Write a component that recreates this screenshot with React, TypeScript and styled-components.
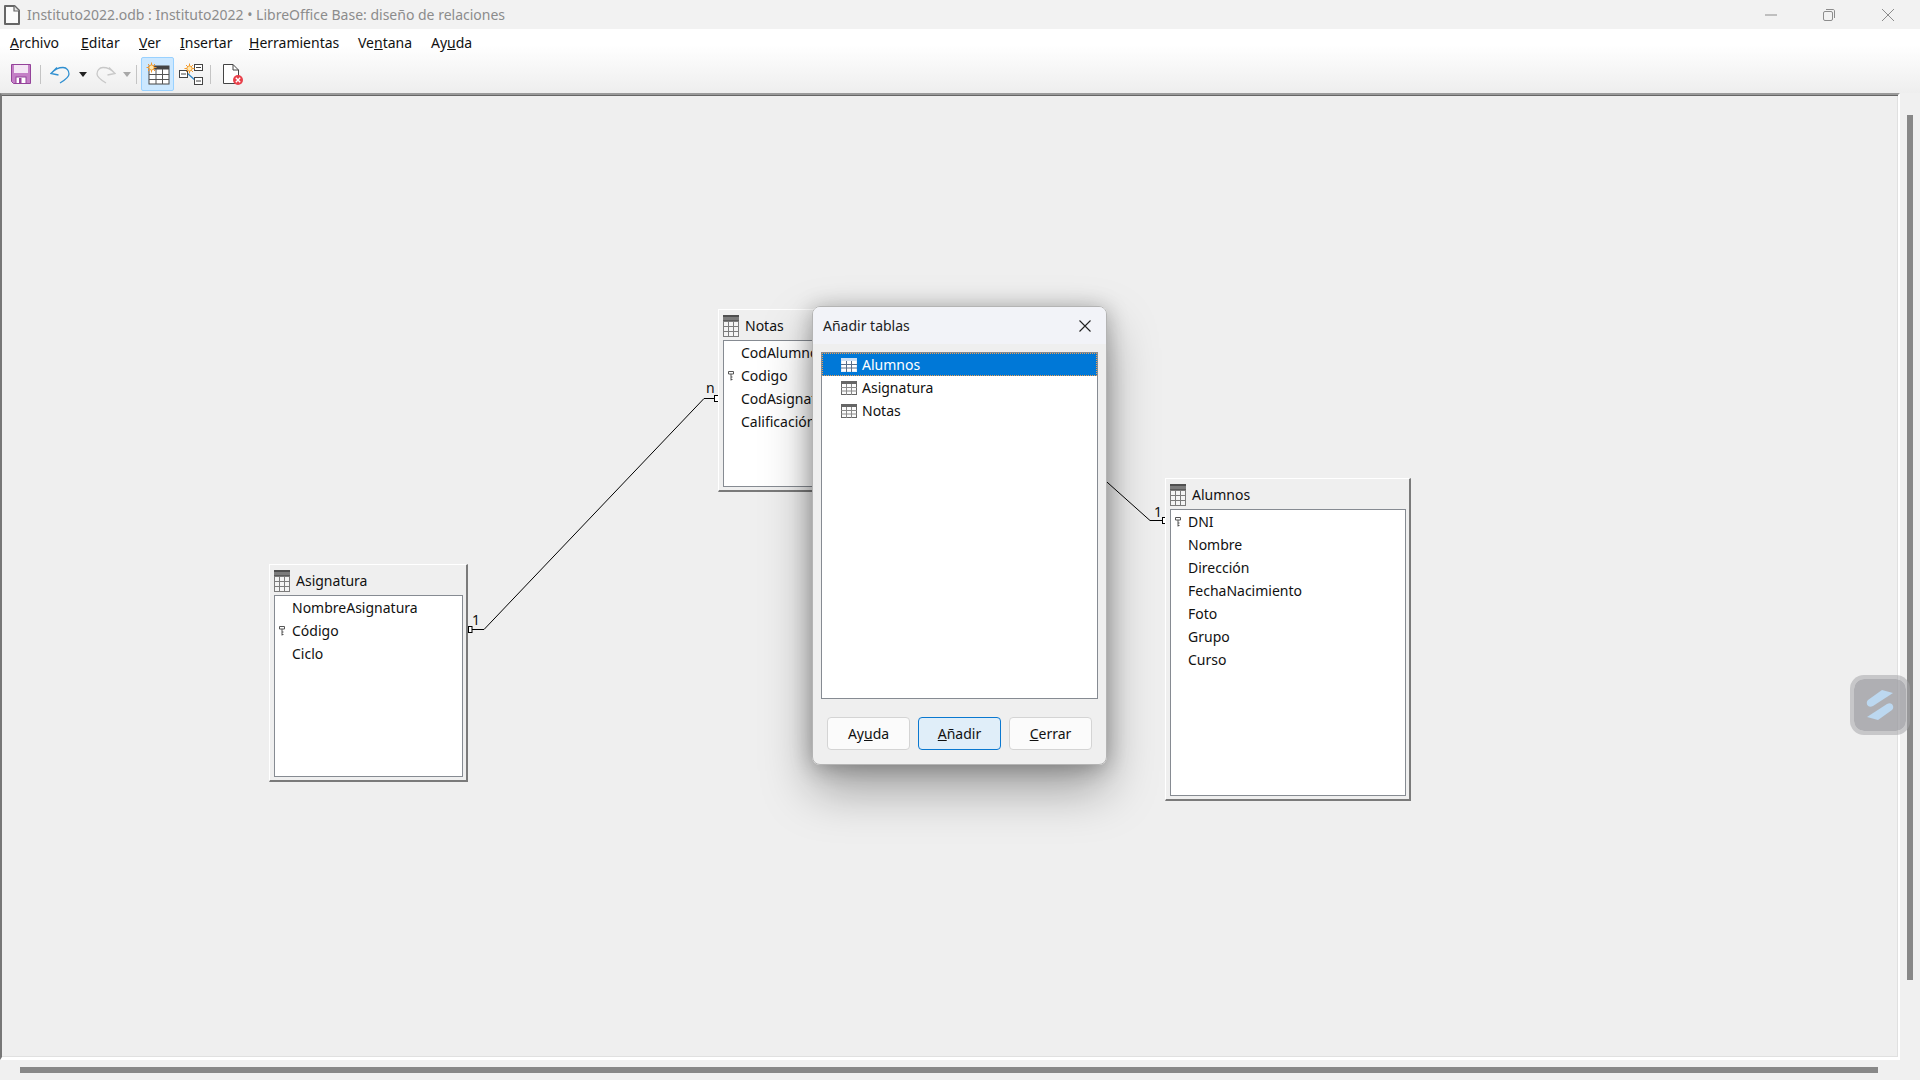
import React from "react";
import styled, { createGlobalStyle } from "styled-components";

const GlobalStyle = createGlobalStyle`
  html, body {
    margin: 0;
    padding: 0;
    background: #f0f0f0;
  }
  * {
    box-sizing: border-box;
  }
`;

const uiFont = `"Noto Sans", "Open Sans", sans-serif`;

const Page = styled.div`
  position: relative;
  width: 1920px;
  height: 1080px;
  overflow: hidden;
  display: flex;
  flex-direction: column;
  font-family: ${uiFont};
  font-size: 14px;
  color: #111;
  background: #f0f0f0;
`;

const TitleBar = styled.div`
  height: 29px;
  display: flex;
  align-items: center;
  padding-left: 4px;
  background: #f2f2f2;
`;

const TitleText = styled.div`
  margin-left: 7px;
  flex: 1;
  color: #8c8c8c;
  font-size: 14px;
`;

const WindowButton = styled.div`
  width: 58.5px;
  height: 29px;
  display: flex;
  align-items: center;
  justify-content: center;
`;

const WindowButtons = styled.div`
  display: flex;
  padding-right: 3px;
`;

const Chrome = styled.div`
  height: 64px;
  background: linear-gradient(#ffffff 0, #ffffff 25%, #eeeeee 100%);
`;

const MenuBar = styled.div`
  height: 26px;
  margin-bottom: 2px;
  display: flex;
  align-items: center;
  padding-left: 10px;
`;

const MenuItem = styled.span<{ $w: number }>`
  width: ${(p) => p.$w}px;
  color: #111;
`;

const Toolbar = styled.div`
  height: 34px;
  display: flex;
  align-items: center;
  padding-left: 8px;
`;

const ToolButton = styled.div<{ $w: number; $active?: boolean }>`
  width: ${(p) => p.$w}px;
  height: 34px;
  display: flex;
  align-items: center;
  justify-content: center;
  border-radius: 2px;
  border: 1px solid ${(p) => (p.$active ? "#99d1ff" : "transparent")};
  background: ${(p) => (p.$active ? "#cce8ff" : "transparent")};
`;

const ToolSep = styled.div<{ $l: number; $r: number }>`
  width: 1px;
  height: 19px;
  margin: 0 ${(p) => p.$r}px 0 ${(p) => p.$l}px;
  background: #c4c4c4;
`;

const Caret = styled.div<{ $muted?: boolean }>`
  width: 0;
  height: 0;
  border-left: 4px solid transparent;
  border-right: 4px solid transparent;
  border-top: 5px solid ${(p) => (p.$muted ? "#a8a8a8" : "#222")};
`;

const Workspace = styled.div`
  flex: 1;
  display: flex;
  min-height: 0;
`;

const Canvas = styled.div`
  position: relative;
  width: 1900px;
  border-top: 2px solid #9a9a9a;
  border-left: 2px solid #777;
  border-right: 2px solid #fff;
  border-bottom: 3px solid #fff;
  background: #efefef;
  box-shadow: inset 0 1px 0 #666, inset 0 -1px 0 #e0e0e0, inset -1px 0 0 #e0e0e0;
`;

const VerticalTrack = styled.div`
  flex: 1;
  padding: 22px 0 0 7px;
`;

const VerticalThumb = styled.div`
  width: 6px;
  height: 865px;
  background: #888;
`;

const HorizontalTrack = styled.div`
  height: 20px;
  padding: 7px 0 0 20px;
`;

const HorizontalThumb = styled.div`
  width: 1858px;
  height: 6px;
  background: #888;
`;

/* positions below are page coordinates, the canvas origin is (2, 95) */
const TableWindow = styled.div<{ $x: number; $y: number; $w: number; $h: number }>`
  position: absolute;
  left: ${(p) => p.$x - 2}px;
  top: ${(p) => p.$y - 95}px;
  width: ${(p) => p.$w}px;
  height: ${(p) => p.$h}px;
  display: flex;
  flex-direction: column;
  padding: 0 3px 3px 4px;
  background: #efefef;
  border-top: 1px solid #fff;
  border-left: 1px solid #fff;
  border-right: 2px solid #7a7a7a;
  border-bottom: 2px solid #7a7a7a;
`;

const TableHeader = styled.div`
  height: 30px;
  flex: none;
  display: flex;
  align-items: center;
  gap: 6px;
  padding-top: 1px;
`;

const FieldList = styled.div`
  flex: 1;
  border: 1px solid #868b92;
  background: #fff;
`;

const FieldRow = styled.div`
  position: relative;
  height: 23px;
  line-height: 23px;
  padding-left: 17px;
  white-space: nowrap;
  overflow: hidden;
`;

const KeyMark = styled.span`
  position: absolute;
  left: 4px;
  top: 7px;
  display: flex;
`;

const Connectors = styled.svg`
  position: absolute;
  left: -2px;
  top: -2px;
  width: 1900px;
  height: 965px;
  pointer-events: none;
`;

const EndLabel = styled.span<{ $x: number; $y: number }>`
  position: absolute;
  left: ${(p) => p.$x - 2}px;
  top: ${(p) => p.$y - 95}px;
  line-height: 16px;
  font-size: 14px;
`;

const Dialog = styled.div`
  position: absolute;
  left: 812px;
  top: 306px;
  width: 295px;
  height: 459px;
  display: flex;
  flex-direction: column;
  border: 1px solid #b4b4b4;
  border-radius: 8px;
  overflow: hidden;
  background: #efefef;
`;

const DialogShadow = styled.div`
  position: absolute;
  left: 812px;
  top: 306px;
  width: 295px;
  height: 459px;
  border-radius: 8px;
  box-shadow: 0 2px 21px rgba(0, 0, 0, 0.28), 0 24px 50px rgba(0, 0, 0, 0.34);
`;

const DialogTitle = styled.div`
  height: 37px;
  flex: none;
  display: flex;
  align-items: center;
  justify-content: space-between;
  padding: 0 15px 0 10px;
  background: #f2f3f8;
  color: #222;
`;

const ListBox = styled.div`
  height: 347px;
  margin: 8px 8px 0 8px;
  border: 1px solid #868b92;
  background: #fff;
`;

const ListRow = styled.div<{ $selected?: boolean }>`
  height: 23px;
  display: flex;
  align-items: center;
  gap: 5px;
  padding-left: 19px;
  color: ${(p) => (p.$selected ? "#fff" : "#111")};
  background: ${(p) => (p.$selected ? "#0078d7" : "transparent")};
  outline: ${(p) => (p.$selected ? "1px dotted #f0a050" : "none")};
  outline-offset: -1px;
`;

const DialogActions = styled.div`
  display: flex;
  gap: 8px;
  margin-top: 18px;
  padding-left: 14px;
`;

const DialogButton = styled.div<{ $primary?: boolean }>`
  width: 83px;
  height: 33px;
  display: flex;
  align-items: center;
  justify-content: center;
  border-radius: 4px;
  border: 1px solid ${(p) => (p.$primary ? "#0a78d0" : "#d4d4d4")};
  background: ${(p) => (p.$primary ? "#e0eef9" : "#fbfbfb")};
`;

const FloatingWidget = styled.div`
  position: absolute;
  left: 1850px;
  top: 675px;
  width: 60px;
  height: 60px;
  display: flex;
  align-items: center;
  justify-content: center;
  border-radius: 14px;
  border: 4px solid rgba(165, 165, 170, 0.55);
  background: rgba(150, 150, 155, 0.72);
  background-clip: padding-box;
`;

const TableIcon = ({ large, light }: { large?: boolean; light?: boolean }) =>
  large ? (
    <svg width="16" height="22" viewBox="0 0 16 22">
      <rect x="0" y="0" width="16" height="22" fill="#7c7c7c" />
      <rect x="0" y="0" width="16" height="2" fill="#4f4f4f" />
      <rect x="0" y="5" width="16" height="1" fill="#5c5c5c" />
      <path d="M1 7H5V11H1ZM6 7H10V11H6ZM11 7H15V11H11ZM1 12H5V16H1ZM6 12H10V16H6ZM11 12H15V16H11ZM1 17H5V21H1ZM6 17H10V21H6ZM11 17H15V21H11Z" fill="#f4f4f4" />
    </svg>
  ) : (
    <svg width="16" height="14" viewBox="0 0 16 14">
      <rect x="0.5" y="0.5" width="15" height="13" fill={light ? "#fff" : "#fbfbfb"} stroke={light ? "#e6eef8" : "#666"} />
      <rect x="0" y="0" width="16" height="3" fill={light ? "#cfe0f4" : "#666"} />
      <path d="M0 6.5H16M0 10H16M5.5 3V14M10.5 3V14" stroke={light ? "#5a6f8a" : "#8a8a8a"} fill="none" />
    </svg>
  );

const KeyIcon = () => (
  <svg width="6" height="10" viewBox="0 0 6 10">
    <path d="M0.5 0.5H5.5V3H0.5ZM3 3V9.5M3 6H4.5M3 8.5H4.5" fill="none" stroke="#555" />
  </svg>
);

const DocIcon = () => (
  <svg width="16" height="20" viewBox="0 0 16 20">
    <path d="M1 1H10.5L15 5.5V19H1Z" fill="#fbfbfb" stroke="#666" strokeWidth="2" strokeLinejoin="round" />
    <path d="M10 1V6H15" fill="#e4e4e4" stroke="#666" strokeWidth="1.2" />
  </svg>
);

const SaveIcon = () => (
  <svg width="20" height="20" viewBox="0 0 20 20">
    <path d="M0.5 0.5H19.5V19.5H2.5L0.5 17.5Z" fill="#c47fc6" stroke="#94439a" />
    <rect x="3" y="1" width="14" height="8" fill="#f4e6f5" />
    <rect x="5" y="13" width="10" height="6.5" fill="#fff" stroke="#94439a" />
    <rect x="8" y="14" width="2.5" height="5" fill="#94439a" />
  </svg>
);

const ArrowIcon = ({ color, flip }: { color: string; flip?: boolean }) => (
  <svg width="20" height="20" viewBox="0 0 20 20" style={flip ? { transform: "scaleX(-1)" } : undefined}>
    <path
      d="M7 3.5L1 9.5L8.5 11M1.5 9C5 5 9 3.5 13 3.5C17 3.5 19 7 19 10C19 13 15 16 10 19"
      fill="none"
      stroke={color}
      strokeWidth="1.3"
    />
  </svg>
);

const Spark = ({ cx, cy }: { cx: number; cy: number }) => (
  <g stroke="#f39a2e" strokeWidth="1">
    <path d={`M${cx - 5} ${cy}H${cx + 5}M${cx} ${cy - 5}V${cy + 5}M${cx - 3.5} ${cy - 3.5}L${cx + 3.5} ${cy + 3.5}M${cx - 3.5} ${cy + 3.5}L${cx + 3.5} ${cy - 3.5}`} />
    <circle cx={cx} cy={cy} r="2.6" fill="#ffe9b0" />
  </g>
);

const NewTableIcon = () => (
  <svg width="24" height="24" viewBox="0 0 24 24">
    <rect x="3" y="4" width="20" height="18" fill="#fff" stroke="#444" />
    <rect x="3" y="4" width="20" height="3.5" fill="#444" />
    <path d="M3 12.5H23M3 17.5H23M10 7V22M16.5 7V22" stroke="#555" fill="none" />
    <Spark cx={5.5} cy={5.5} />
  </svg>
);

const NewRelationIcon = () => (
  <svg width="24" height="22" viewBox="0 0 24 22">
    <path d="M8 10L17 18" stroke="#2f86c8" strokeWidth="1.4" />
    <rect x="0.5" y="7.5" width="8" height="7" fill="#fff" stroke="#444" />
    <rect x="15.5" y="1.5" width="8" height="6" fill="#fff" stroke="#444" />
    <rect x="15.5" y="14.5" width="8" height="7" fill="#fff" stroke="#444" />
    <path d="M2 11H7M17 4.5H22M17 18H22" stroke="#444" />
    <Spark cx={10.5} cy={5.5} />
  </svg>
);

const CloseDocIcon = () => (
  <svg width="20" height="21" viewBox="0 0 20 21">
    <path d="M0.5 0.5H10L15.5 6V19.5H0.5Z" fill="#fff" stroke="#444" />
    <path d="M10 0.5V6H15.5" fill="none" stroke="#444" />
    <circle cx="15" cy="16" r="5" fill="#e8404a" />
    <path d="M12.8 13.8L17.2 18.2M17.2 13.8L12.8 18.2" stroke="#fff" strokeWidth="1.4" />
  </svg>
);

const tables = [
  {
    name: "Asignatura",
    x: 269,
    y: 564,
    w: 199,
    h: 218,
    fields: [
      { label: "NombreAsignatura" },
      { label: "Código", key: true },
      { label: "Ciclo" },
    ],
  },
  {
    name: "Notas",
    x: 718,
    y: 309,
    w: 230,
    h: 183,
    fields: [
      { label: "CodAlumno" },
      { label: "Codigo", key: true },
      { label: "CodAsignatura" },
      { label: "Calificación" },
    ],
  },
  {
    name: "Alumnos",
    x: 1165,
    y: 478,
    w: 246,
    h: 323,
    fields: [
      { label: "DNI", key: true },
      { label: "Nombre" },
      { label: "Dirección" },
      { label: "FechaNacimiento" },
      { label: "Foto" },
      { label: "Grupo" },
      { label: "Curso" },
    ],
  },
];

const menus: { before: string; mark: string; after: string; w: number }[] = [
  { before: "", mark: "A", after: "rchivo", w: 71 },
  { before: "", mark: "E", after: "ditar", w: 58 },
  { before: "", mark: "V", after: "er", w: 41 },
  { before: "", mark: "I", after: "nsertar", w: 69 },
  { before: "", mark: "H", after: "erramientas", w: 109 },
  { before: "Ve", mark: "n", after: "tana", w: 73 },
  { before: "Ay", mark: "u", after: "da", w: 50 },
];

export default function App() {
  return (
    <Page>
      <GlobalStyle />
      <TitleBar>
        <DocIcon />
        <TitleText>Instituto2022.odb : Instituto2022 • LibreOffice Base: diseño de relaciones</TitleText>
        <WindowButtons>
          <WindowButton>
            <svg width="12" height="2" viewBox="0 0 12 2">
              <path d="M0 1H12" stroke="#8c8c8c" />
            </svg>
          </WindowButton>
          <WindowButton>
            <svg width="12" height="12" viewBox="0 0 12 12">
              <rect x="0.5" y="2.5" width="9" height="9" rx="1.5" fill="none" stroke="#8c8c8c" />
              <path d="M3 0.5H10C11 0.5 11.5 1 11.5 2V9" fill="none" stroke="#8c8c8c" />
            </svg>
          </WindowButton>
          <WindowButton>
            <svg width="12" height="12" viewBox="0 0 12 12">
              <path d="M0 0L12 12M12 0L0 12" stroke="#8c8c8c" />
            </svg>
          </WindowButton>
        </WindowButtons>
      </TitleBar>
      <Chrome>
        <MenuBar>
          {menus.map((m) => (
            <MenuItem key={m.mark + m.after} $w={m.w}>
              {m.before}
              <u>{m.mark}</u>
              {m.after}
            </MenuItem>
          ))}
        </MenuBar>
        <Toolbar>
          <ToolButton $w={26}><SaveIcon /></ToolButton>
          <ToolSep $l={6} $r={5} />
          <ToolButton $w={28}><ArrowIcon color="#2f8fd0" /></ToolButton>
          <ToolButton $w={18}><Caret /></ToolButton>
          <ToolButton $w={27}><ArrowIcon color="#c8c8c8" flip /></ToolButton>
          <ToolButton $w={16}><Caret $muted /></ToolButton>
          <ToolSep $l={1} $r={4} />
          <ToolButton $w={33} $active><NewTableIcon /></ToolButton>
          <ToolButton $w={34}><NewRelationIcon /></ToolButton>
          <ToolSep $l={2} $r={5} />
          <ToolButton $w={34}><CloseDocIcon /></ToolButton>
        </Toolbar>
      </Chrome>
      <Workspace>
        <Canvas>
          <Connectors viewBox="0 0 1900 965">
            <g transform="translate(0 -93)" fill="none" stroke="#000">
              <path d="M468 629.5H484L704 398.5H717" />
              <rect x="468.5" y="626.5" width="3.5" height="6" fill="#fff" />
              <rect x="714.5" y="395.5" width="4" height="6" fill="#fff" />
              <path d="M940 333L1150 520.5H1163" />
              <rect x="1162.5" y="517.5" width="4" height="6" fill="#fff" />
            </g>
          </Connectors>
          {tables.map((t) => (
            <TableWindow key={t.name} $x={t.x} $y={t.y} $w={t.w} $h={t.h}>
              <TableHeader>
                <TableIcon large />
                {t.name}
              </TableHeader>
              <FieldList>
                {t.fields.map((f) => (
                  <FieldRow key={f.label}>
                    {f.key && (
                      <KeyMark>
                        <KeyIcon />
                      </KeyMark>
                    )}
                    {f.label}
                  </FieldRow>
                ))}
              </FieldList>
            </TableWindow>
          ))}
          <EndLabel $x={472} $y={612}>1</EndLabel>
          <EndLabel $x={706} $y={380}>n</EndLabel>
          <EndLabel $x={1154} $y={504}>1</EndLabel>
        </Canvas>
        <VerticalTrack>
          <VerticalThumb />
        </VerticalTrack>
      </Workspace>
      <HorizontalTrack>
        <HorizontalThumb />
      </HorizontalTrack>
      <DialogShadow />
      <Dialog>
        <DialogTitle>
          Añadir tablas
          <svg width="12" height="12" viewBox="0 0 12 12">
            <path d="M0.5 0.5L11.5 11.5M11.5 0.5L0.5 11.5" stroke="#222" strokeWidth="1.1" />
          </svg>
        </DialogTitle>
        <ListBox>
          <ListRow $selected>
            <TableIcon light />
            Alumnos
          </ListRow>
          <ListRow>
            <TableIcon />
            Asignatura
          </ListRow>
          <ListRow>
            <TableIcon />
            Notas
          </ListRow>
        </ListBox>
        <DialogActions>
          <DialogButton>
            <span>Ay<u>u</u>da</span>
          </DialogButton>
          <DialogButton $primary>
            <span><u>A</u>ñadir</span>
          </DialogButton>
          <DialogButton>
            <span><u>C</u>errar</span>
          </DialogButton>
        </DialogActions>
      </Dialog>
      <FloatingWidget>
        <svg width="30" height="32" viewBox="0 0 30 32">
          <path d="M17 1L28 4L8 17C3 20 0 14 3 11Z" fill="#bcd8f0" />
          <path d="M13 31L2 28L22 15C27 12 30 18 27 21Z" fill="#bcd8f0" />
        </svg>
      </FloatingWidget>
    </Page>
  );
}
